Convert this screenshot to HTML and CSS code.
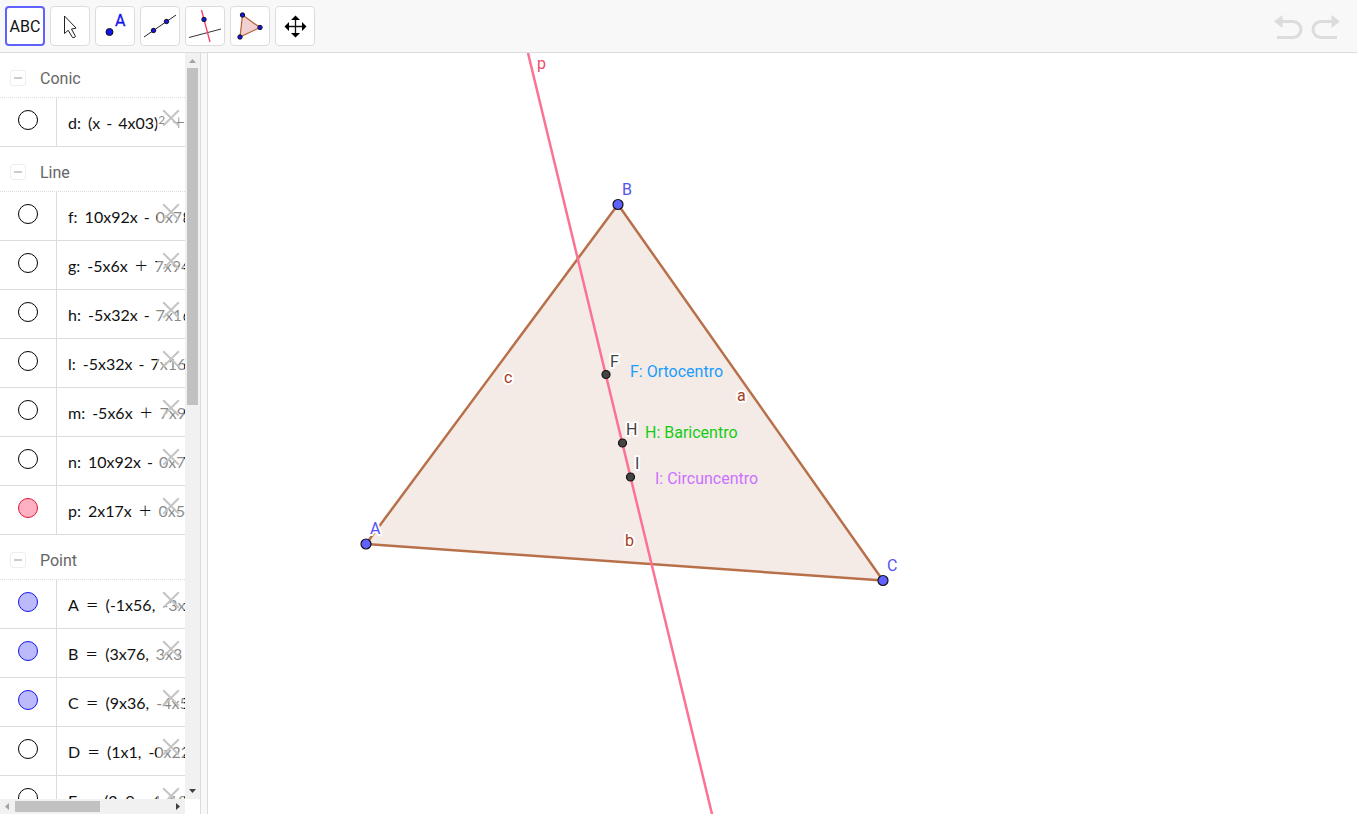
FILE: index.html
```
<!DOCTYPE html>
<html lang="en">
<head>
<meta charset="utf-8">
<title>Geometry</title>
<link rel="stylesheet" href="styles.css">
</head>
<body>
<div class="app">
  <header class="toolbar">
    <nav class="tools" aria-label="Tools">
      <button class="tool tool-active" aria-label="Text"><span>ABC</span></button>
      <button class="tool" aria-label="Move"><svg viewBox="0 0 36 36"><path d="M12.500 8v17.500l3.700-3.200 4.300 7.200q1.500.8 3-1l-4-7.500 4.600-.9z" fill="#fff" stroke="#222" stroke-width="1"/></svg></button>
      <button class="tool" aria-label="Point"><svg viewBox="0 0 36 36"><circle cx="12.500" cy="24" r="3.500" fill="#1414f0" stroke="#111" stroke-width="1"/><text x="18" y="18" class="tool-letter">A</text></svg></button>
      <button class="tool" aria-label="Line"><svg viewBox="0 0 36 36"><path d="M2 29L34 7" stroke="#222" fill="none"/><circle cx="11.500" cy="22.500" r="2.200" fill="#1414f0" stroke="#111"/><circle cx="24.500" cy="13.500" r="2.200" fill="#1414f0" stroke="#111"/></svg></button>
      <button class="tool" aria-label="Perpendicular line"><svg viewBox="0 0 36 36"><path d="M2 29.500L34 21" stroke="#333" fill="none"/><path d="M14.500 2L23 34" stroke="#f53b67" stroke-width="1.300"/><circle cx="17" cy="11.500" r="2.200" fill="#1414f0" stroke="#111"/></svg></button>
      <button class="tool" aria-label="Polygon"><svg viewBox="0 0 36 36"><path d="M10.500 7L28 19.500 8 29z" fill="#f2cfd0" stroke="#b06537" stroke-width="1.200"/><circle cx="10.500" cy="7" r="2.200" fill="#1414f0" stroke="#111"/><circle cx="28" cy="19.500" r="2.200" fill="#1414f0" stroke="#111"/><circle cx="8" cy="29" r="2.200" fill="#1414f0" stroke="#111"/></svg></button>
      <button class="tool" aria-label="Move view"><svg viewBox="0 0 36 36"><path d="M11 18.500h15M18.500 11v15" stroke="#111" stroke-width="1.300"/><path d="M18.500 7.500l-4.500 4.500h9zM18.500 29.500l-4.500-4.500h9zM7.500 18.500l4.500-4.500v9zM29.500 18.500l-4.500-4.500v9z"/></svg></button>
    </nav>
    <div class="history">
      <button class="step" aria-label="Undo"><svg viewBox="0 0 30 26"><path d="M7 8.500h13a7.500 7.500 0 0 1 0 16H4"/><path class="head" d="M1 8.500l8.500-6.500v13z"/></svg></button>
      <button class="step" aria-label="Redo"><svg viewBox="0 0 30 26"><path d="M23 8.500H10a7.500 7.500 0 0 0 0 16H26"/><path class="head" d="M29 8.500l-8.500-6.500v13z"/></svg></button>
    </div>
  </header>
  <main class="work">
    <aside class="algebra">
      <div class="list">
        <section>
          <h2 class="group"><button class="fold" aria-label="Collapse Conic"></button>Conic</h2>
          <div class="row"><span class="mark"><input type="checkbox" class="dot" aria-label="Show d"></span><span class="expr">d:<i class="gap"></i>(x<i class="op">-</i>4x03)<sup>2</sup><i class="op wide">+</i></span><button class="remove" aria-label="Delete d"></button></div>
        </section>
        <section>
          <h2 class="group"><button class="fold" aria-label="Collapse Line"></button>Line</h2>
          <div class="row"><span class="mark"><input type="checkbox" class="dot" aria-label="Show f"></span><span class="expr">f:<i class="gap"></i>10x92x<i class="op">-</i>0x78</span><button class="remove" aria-label="Delete f"></button></div>
          <div class="row"><span class="mark"><input type="checkbox" class="dot" aria-label="Show g"></span><span class="expr">g:<i class="gap"></i>-5x6x<i class="op wide">+</i>7x94</span><button class="remove" aria-label="Delete g"></button></div>
          <div class="row"><span class="mark"><input type="checkbox" class="dot" aria-label="Show h"></span><span class="expr">h:<i class="gap"></i>-5x32x<i class="op">-</i>7x16</span><button class="remove" aria-label="Delete h"></button></div>
          <div class="row"><span class="mark"><input type="checkbox" class="dot" aria-label="Show l"></span><span class="expr">l:<i class="gap"></i>-5x32x<i class="op">-</i>7x16</span><button class="remove" aria-label="Delete l"></button></div>
          <div class="row"><span class="mark"><input type="checkbox" class="dot" aria-label="Show m"></span><span class="expr">m:<i class="gap"></i>-5x6x<i class="op wide">+</i>7x9</span><button class="remove" aria-label="Delete m"></button></div>
          <div class="row"><span class="mark"><input type="checkbox" class="dot" aria-label="Show n"></span><span class="expr">n:<i class="gap"></i>10x92x<i class="op">-</i>0x7</span><button class="remove" aria-label="Delete n"></button></div>
          <div class="row"><span class="mark"><input type="checkbox" class="dot dot-red" aria-label="Show p" checked></span><span class="expr">p:<i class="gap"></i>2x17x<i class="op wide">+</i>0x5</span><button class="remove" aria-label="Delete p"></button></div>
        </section>
        <section>
          <h2 class="group"><button class="fold" aria-label="Collapse Point"></button>Point</h2>
          <div class="row"><span class="mark"><input type="checkbox" class="dot dot-blue" aria-label="Show A" checked></span><span class="expr">A<i class="op wide">=</i>(-1x56,<i class="gap"></i>-3x</span><button class="remove" aria-label="Delete A"></button></div>
          <div class="row"><span class="mark"><input type="checkbox" class="dot dot-blue" aria-label="Show B" checked></span><span class="expr">B<i class="op wide">=</i>(3x76,<i class="gap"></i>3x3</span><button class="remove" aria-label="Delete B"></button></div>
          <div class="row"><span class="mark"><input type="checkbox" class="dot dot-blue" aria-label="Show C" checked></span><span class="expr">C<i class="op wide">=</i>(9x36,<i class="gap"></i>-4x5</span><button class="remove" aria-label="Delete C"></button></div>
          <div class="row"><span class="mark"><input type="checkbox" class="dot" aria-label="Show D"></span><span class="expr">D<i class="op wide">=</i>(1x1,<i class="gap"></i>-0x22</span><button class="remove" aria-label="Delete D"></button></div>
          <div class="row"><span class="mark"><input type="checkbox" class="dot" aria-label="Show E"></span><span class="expr">E<i class="op wide">=</i>(2x9,<i class="gap"></i>-4x18</span><button class="remove" aria-label="Delete E"></button></div>
        </section>
      </div>
      <div class="vbar">
        <svg viewBox="0 0 15 15"><path d="M4 10l3.500-4L11 10z" fill="#a3a3a3"/></svg>
        <div class="track"><div class="thumb"></div></div>
        <svg viewBox="0 0 15 15"><path d="M4 5l3.500 4L11 5z" fill="#404040"/></svg>
      </div>
      <div class="hbar">
        <svg viewBox="0 0 15 15"><path d="M9 4L5 7.500 9 11z" fill="#a3a3a3"/></svg>
        <div class="track"><div class="thumb"></div></div>
        <svg viewBox="0 0 15 15"><path d="M6 4l4 3.500L6 11z" fill="#404040"/></svg>
      </div>
    </aside>
    <div class="splitter"></div>
    <svg class="graph" role="img" aria-label="Triangle ABC with its Euler line">
      <path d="M158 491L410 151.500 675 527.500z" class="triangle"/>
      <path d="M320 0L504 761l12 50" class="euler"/>
      <g class="vertex"><circle cx="158" cy="491" r="5"/><circle cx="410" cy="151.500" r="5"/><circle cx="675" cy="527.500" r="5"/></g>
      <g class="centre"><circle cx="398" cy="321.500" r="4"/><circle cx="414.500" cy="390" r="4"/><circle cx="422.500" cy="424" r="4"/></g>
      <g class="label blue"><text x="162" y="481">A</text><text x="414" y="142">B</text><text x="679" y="518">C</text></g>
      <g class="label brown"><text x="529" y="348">a</text><text x="417" y="493">b</text><text x="296" y="330">c</text></g>
      <g class="label dark"><text x="402" y="314">F</text><text x="418" y="382">H</text><text x="427" y="416">I</text></g>
      <text x="329" y="16" class="label pink">p</text>
      <text x="422" y="324" class="note sky">F: Ortocentro</text>
      <text x="437" y="385" class="note green">H: Baricentro</text>
      <text x="447" y="431" class="note violet">I: Circuncentro</text>
    </svg>
  </main>
</div>
</body>
</html>
```
FILE: styles.css
```
* { box-sizing: border-box; }
body { margin: 0; background: #fff; font-family: Roboto, sans-serif; }
button { padding: 0; font: inherit; cursor: pointer; }
.app { display: flex; flex-direction: column; height: 100vh; padding: 0 2px 2px 0; }

.toolbar { display: flex; justify-content: space-between; align-items: center; flex: none; height: 53px; padding: 0 16px 0 5px; background: #f8f8f8; border-bottom: 1px solid #dcdcdc; }
.tools { display: flex; gap: 5px; }
.tool { display: grid; place-items: center; width: 40px; height: 40px; border: 1px solid #dcdcdc; border-radius: 4px; background: #fff; font-size: 16px; color: #111; }
.tool svg { width: 36px; height: 36px; }
.tool-active { border: 2px solid #6161ff; }
.tool-letter { font: 16px Roboto, sans-serif; fill: #1414f0; stroke: #1414f0; stroke-width: 0.3; }
.history { display: flex; gap: 8px; }
.step { border: 0; background: none; width: 30px; height: 26px; }
.step svg { display: block; width: 30px; height: 26px; fill: none; stroke: #dcdcdc; stroke-width: 3; }
.step .head { fill: #dcdcdc; stroke: none; }

.work { display: flex; flex: 1; min-height: 0; }
.algebra { display: grid; grid-template: minmax(0, 1fr) 15px / minmax(0, 1fr) 15px; flex: none; width: 200px; }
.list { overflow: hidden; }
.group { display: flex; align-items: center; gap: 14px; height: 45px; margin: 0; padding: 6px 0 0 10px; border-bottom: 1px dotted #dcdcdc; font-size: 16px; font-weight: 400; color: #666; }
.fold { display: grid; place-items: center; width: 16px; height: 16px; border: 1px solid #eee; border-radius: 3px; background: #fff; }
.fold::before { content: ""; width: 8px; height: 2px; background: #ccc; }
.row { position: relative; display: flex; height: 49px; border-bottom: 1px solid #dcdcdc; }
.mark { flex: none; width: 57px; padding: 12px 0 0 18px; border-right: 1px solid #dcdcdc; }
.dot { display: block; appearance: none; width: 20px; height: 20px; margin: 0; border: 1px solid #000; border-radius: 50%; }
.dot-red { background: #ffb0c2; border-color: #dc143c; }
.dot-blue { background: #bbbbfb; border-color: #1414f0; }
.expr { flex: 1; padding: 14px 0 0 11px; overflow: hidden; white-space: nowrap; font: 16px/22px Lato, sans-serif; color: #111; }
.expr sup { font-size: 12px; line-height: 0; vertical-align: 5px; }
.op { margin: 0 6px; font-style: normal; }
.wide { margin: 0 7px; font-size: 22px; font-weight: 300; line-height: 0; vertical-align: -1px; }
.gap { margin-left: 7px; }
.remove { position: absolute; top: 6px; right: 1px; width: 27px; height: 36px; border: 0; background: rgba(255, 255, 255, 0.5); }
.remove::before, .remove::after { content: ""; position: absolute; top: 13px; right: 2px; width: 22px; height: 2px; background: #c4c4c4; transform: rotate(45deg); }
.remove::after { transform: rotate(-45deg); }

.vbar, .hbar { display: flex; background: #f1f1f1; }
.vbar { flex-direction: column; }
.vbar svg, .hbar svg { flex: none; width: 15px; height: 15px; }
.track { flex: 1; }
.thumb { background: #c1c1c1; }
.vbar .thumb { width: 11px; height: 47%; margin-left: 2px; }
.hbar .thumb { width: 55%; height: 11px; margin-top: 2px; }
.splitter { flex: none; width: 8px; border: solid #dcdcdc; border-width: 0 1px; background: #f8f8f8; }

.graph { flex: 1; min-width: 0; height: 100%; overflow: hidden; }
.triangle { fill: #f4ebe6; stroke: #b8704a; stroke-width: 2.5; stroke-linejoin: round; }
.euler { fill: none; stroke: #fb7295; stroke-width: 2.5; }
.vertex { fill: #6161ff; stroke: #111; stroke-width: 1.2; }
.centre { fill: #444; stroke: #111; stroke-width: 1.2; }
.label { font-size: 16px; stroke: #fff; stroke-width: 4; stroke-linejoin: round; paint-order: stroke; }
.note { font-size: 16px; }
.blue { fill: #5252f5; }
.brown { fill: #a83c1c; }
.dark { fill: #444; }
.pink { fill: #ec4a72; }
.sky { fill: #1a9cff; }
.green { fill: #14cc14; }
.violet { fill: #cc70ff; }
```
